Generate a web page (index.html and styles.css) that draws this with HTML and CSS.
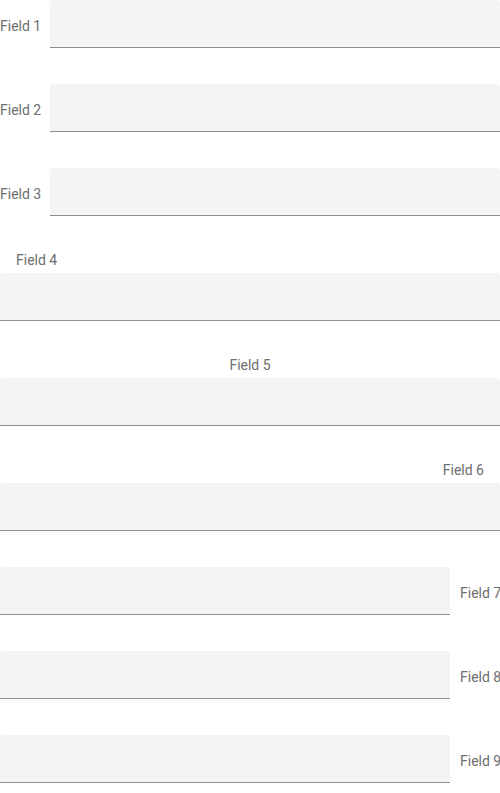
FILE: index.html
```html
<!DOCTYPE html>
<html>
<head>
<meta charset="utf-8">
<link rel="stylesheet" href="styles.css">
</head>
<body>
<div class="form">
  <div class="row side">
    <label class="lbl">Field 1</label>
    <div class="field"></div>
  </div>
  <div class="row side">
    <label class="lbl">Field 2</label>
    <div class="field"></div>
  </div>
  <div class="row side">
    <label class="lbl">Field 3</label>
    <div class="field"></div>
  </div>
  <div class="row top">
    <label class="lbl top-left">Field 4</label>
    <div class="field"></div>
  </div>
  <div class="row top">
    <label class="lbl top-center">Field 5</label>
    <div class="field"></div>
  </div>
  <div class="row top">
    <label class="lbl top-right">Field 6</label>
    <div class="field"></div>
  </div>
  <div class="row side">
    <div class="field"></div>
    <label class="lbl">Field 7</label>
  </div>
  <div class="row side">
    <div class="field"></div>
    <label class="lbl">Field 8</label>
  </div>
  <div class="row side">
    <div class="field"></div>
    <label class="lbl">Field 9</label>
  </div>
</div>
</body>
</html>
```
FILE: styles.css
```css
html, body {
  margin: 0;
  padding: 0;
  background: #fff;
}
body {
  font-family: Roboto, "Liberation Sans", sans-serif;
  font-size: 14px;
  color: #6e6e6e;
}
.form {
  display: flex;
  flex-direction: column;
  gap: 36px;
  width: 500px;
}
.row.side {
  display: flex;
  align-items: center;
  gap: 10px;
}
.row.top {
  display: flex;
  flex-direction: column;
}
.lbl {
  display: block;
  white-space: nowrap;
  line-height: 16px;
}
.side .lbl {
  width: 40px;
  flex: none;
  padding-top: 3px;
}
.top .lbl {
  padding-bottom: 5px;
}
.top-left { text-align: left; padding-left: 16px; }
.top-center { text-align: center; }
.top-right { text-align: right; padding-right: 16px; }
.field {
  height: 47px;
  background: #f4f4f4;
  border-bottom: 1px solid #8e8e8e;
  border-radius: 4px 4px 0 0;
}
.side .field {
  flex: 1;
}
```
